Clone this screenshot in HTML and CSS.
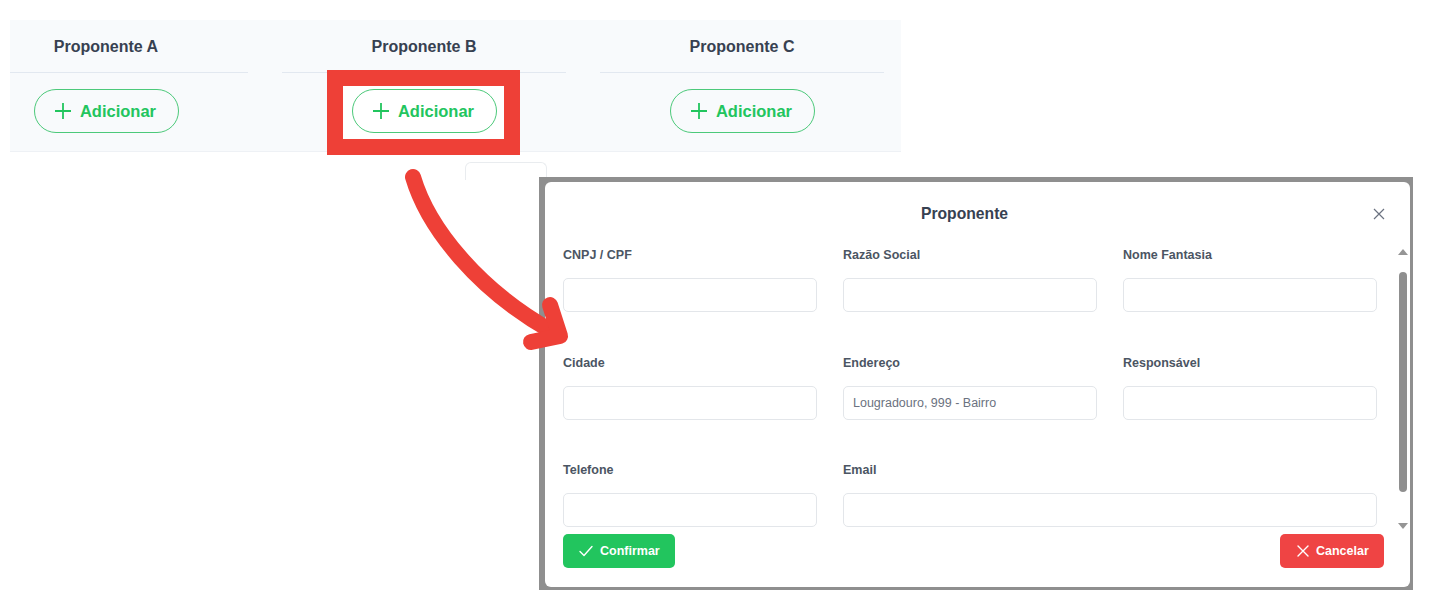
FILE: index.html
```html
<!DOCTYPE html>
<html lang="pt-BR">
<head>
<meta charset="utf-8">
<title>Proponentes</title>
<link rel="stylesheet" href="styles.css">
</head>
<body>
<div class="page">
  <section class="proponents">
    <div class="col col-a">
      <div class="col-head"><span>Proponente A</span></div>
      <div class="col-body">
        <button class="add-btn" type="button">
          <svg class="plus" viewBox="0 0 18 18" width="18" height="18"><path d="M9 1v16M1 9h16"/></svg>
          <span>Adicionar</span>
        </button>
      </div>
    </div>
    <div class="col">
      <div class="col-head"><span>Proponente B</span></div>
      <div class="col-body">
        <button class="add-btn" type="button">
          <svg class="plus" viewBox="0 0 18 18" width="18" height="18"><path d="M9 1v16M1 9h16"/></svg>
          <span>Adicionar</span>
        </button>
      </div>
    </div>
    <div class="col">
      <div class="col-head"><span>Proponente C</span></div>
      <div class="col-body">
        <button class="add-btn" type="button">
          <svg class="plus" viewBox="0 0 18 18" width="18" height="18"><path d="M9 1v16M1 9h16"/></svg>
          <span>Adicionar</span>
        </button>
      </div>
    </div>
  </section>

  <div class="highlight"></div>
  <div class="ghost-card"></div>

  <div class="modal-frame">
    <div class="modal">
      <header class="modal-head">
        <h2 class="modal-title">Proponente</h2>
        <button class="close-btn" type="button" aria-label="Fechar">
          <svg viewBox="0 0 12 12" width="12" height="12"><path d="M1 1l10 10M11 1L1 11"/></svg>
        </button>
      </header>
      <div class="modal-body">
        <form class="form-grid">
          <label class="field"><span class="field-label">CNPJ / CPF</span><input class="field-input" type="text"></label>
          <label class="field"><span class="field-label">Razão Social</span><input class="field-input" type="text"></label>
          <label class="field"><span class="field-label">Nome Fantasia</span><input class="field-input" type="text"></label>
          <label class="field"><span class="field-label">Cidade</span><input class="field-input" type="text"></label>
          <label class="field"><span class="field-label">Endereço</span><input class="field-input" type="text" placeholder="Lougradouro, 999 - Bairro"></label>
          <label class="field"><span class="field-label">Responsável</span><input class="field-input" type="text"></label>
          <label class="field"><span class="field-label">Telefone</span><input class="field-input" type="text"></label>
          <label class="field field-wide"><span class="field-label">Email</span><input class="field-input" type="text"></label>
        </form>
        <div class="scrollbar">
          <span class="scroll-up"></span>
          <span class="scroll-thumb"></span>
          <span class="scroll-down"></span>
        </div>
      </div>
      <footer class="modal-foot">
        <button class="btn btn-confirm" type="button">
          <svg viewBox="0 0 14 12" width="14" height="12"><path d="M1 6.5l4 4L13 1.5"/></svg>
          <span>Confirmar</span>
        </button>
        <button class="btn btn-cancel" type="button">
          <svg viewBox="0 0 12 12" width="12" height="12"><path d="M1 1l10 10M11 1L1 11"/></svg>
          <span>Cancelar</span>
        </button>
      </footer>
    </div>
  </div>

  <svg class="arrow" viewBox="0 0 1439 613" width="1439" height="613">
    <path d="M413 177 C 428 228 478 290 553 332"/>
    <path d="M550 305 L560 336 L531 342"/>
  </svg>
</div>
</body>
</html>
```

FILE: styles.css
```css
* {
  box-sizing: border-box;
}

html, body {
  margin: 0;
  padding: 0;
  background: #ffffff;
}

body {
  font-family: "Liberation Sans", Arial, sans-serif;
  color: #374151;
}

.page {
  position: relative;
  width: 1439px;
  height: 613px;
  overflow: hidden;
}

/* ---------- Proponents table ---------- */
.proponents {
  margin: 20px 0 0 10px;
  width: 891px;
  height: 132px;
  display: grid;
  grid-template-columns: 255px 318px 318px;
  background: #f8fafc;
  border-bottom: 1px solid #eef1f5;
}

.col-head {
  height: 53px;
  margin: 0 17px;
  padding-top: 2px;
  border-bottom: 1px solid #e2e8f0;
  display: flex;
  align-items: center;
  justify-content: center;
  font-size: 16px;
  font-weight: 700;
  color: #374151;
}

.col-body {
  padding: 16px 17px 0;
  display: flex;
  justify-content: center;
}

.col-a .col-head {
  margin: 0 17px 0 0;
  padding-right: 46px;
}

.col-a .col-body {
  padding: 16px 63px 0 0;
}

.add-btn {
  position: relative;
  z-index: 1;
  width: 145px;
  height: 44px;
  border: 1px solid #4cc97a;
  border-radius: 22px;
  background: transparent;
  display: flex;
  align-items: center;
  justify-content: center;
  gap: 8px;
  padding: 0 2px 0 0;
  font-family: "Liberation Sans", Arial, sans-serif;
  font-size: 16.5px;
  font-weight: 700;
  color: #22c55e;
  cursor: pointer;
}

.plus {
  fill: none;
  stroke: #22c55e;
  stroke-width: 1.8;
}

/* ---------- annotations ---------- */
.highlight {
  position: absolute;
  left: 327px;
  top: 70px;
  width: 193px;
  height: 85px;
  border: 16px solid #ee4037;
  background: #ffffff;
  z-index: 0;
}

.ghost-card {
  position: absolute;
  left: 465px;
  top: 162px;
  width: 82px;
  height: 18px;
  border: 1px solid #e9ecef;
  border-bottom: 0;
  border-radius: 6px 6px 0 0;
  background: #ffffff;
}

.arrow {
  position: absolute;
  left: 0;
  top: 0;
  z-index: 5;
  fill: none;
  stroke: #ee4037;
  stroke-width: 16;
  stroke-linecap: round;
  stroke-linejoin: round;
  pointer-events: none;
}

/* ---------- modal ---------- */
.modal-frame {
  position: absolute;
  left: 539px;
  top: 177px;
  width: 874px;
  height: 413px;
  padding: 5px 3px 3px 6px;
  background: #8f8f8f;
  z-index: 2;
}

.modal {
  height: 100%;
  background: #ffffff;
  border-radius: 6px;
  display: flex;
  flex-direction: column;
}

.modal-head {
  height: 60px;
  flex: none;
  display: flex;
  align-items: center;
  padding: 3px 18px 0;
}

.modal-title {
  flex: 1;
  margin: 0;
  text-align: center;
  font-size: 15.7px;
  font-weight: 700;
  color: #374151;
}

.close-btn {
  width: 26px;
  height: 26px;
  border: 0;
  background: transparent;
  padding: 0;
  display: flex;
  align-items: center;
  justify-content: center;
}

.close-btn svg {
  fill: none;
  stroke: #6b7280;
  stroke-width: 1.2;
}

.modal-body {
  height: 288px;
  flex: none;
  display: flex;
  overflow: hidden;
}

.form-grid {
  margin: 0;
  padding: 6px 0 0 18px;
  display: grid;
  grid-template-columns: 254px 254px 254px;
  column-gap: 26px;
  row-gap: 43.5px;
  align-content: start;
}

.field {
  display: flex;
  flex-direction: column;
}

.field-wide {
  grid-column: span 2;
}

.field-label {
  font-size: 12.5px;
  line-height: 15px;
  font-weight: 700;
  color: #4b5563;
  margin-bottom: 15px;
}

.field-input {
  height: 34px;
  border: 1px solid #e3e6ea;
  border-radius: 5px;
  padding: 0 9px;
  font-family: "Liberation Sans", Arial, sans-serif;
  font-size: 12.5px;
  color: #374151;
  background: #ffffff;
  outline: none;
}

.field-input::placeholder {
  color: #6b7280;
}

.scrollbar {
  width: 12px;
  margin-left: 20px;
  display: flex;
  flex-direction: column;
  align-items: center;
}

.scroll-up {
  margin-top: 7px;
  width: 0;
  height: 0;
  border-left: 5px solid transparent;
  border-right: 5px solid transparent;
  border-bottom: 6px solid #959595;
}

.scroll-thumb {
  margin-top: 17px;
  width: 8px;
  height: 220px;
  border-radius: 4px;
  background: #8f8f8f;
}

.scroll-down {
  margin-top: auto;
  margin-bottom: 1px;
  width: 0;
  height: 0;
  border-left: 5px solid transparent;
  border-right: 5px solid transparent;
  border-top: 6px solid #959595;
}

.modal-foot {
  flex: none;
  display: flex;
  justify-content: space-between;
  padding: 4px 26px 19px 18px;
}

.btn {
  height: 34px;
  border: 0;
  border-radius: 5px;
  display: flex;
  align-items: center;
  gap: 7px;
  font-family: "Liberation Sans", Arial, sans-serif;
  font-size: 12.5px;
  font-weight: 700;
  color: #ffffff;
}

.btn svg {
  fill: none;
  stroke: #ffffff;
  stroke-width: 1.4;
  stroke-linecap: round;
  stroke-linejoin: round;
}

.btn-confirm {
  width: 112px;
  padding: 0 0 0 16px;
  background: #22c55e;
}

.btn-cancel {
  width: 104px;
  padding: 0 0 0 17px;
  background: #ef4444;
}
```
